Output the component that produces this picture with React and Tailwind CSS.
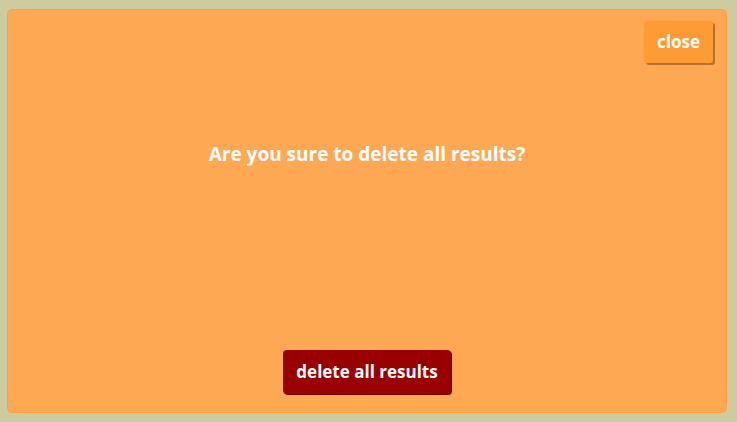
import React from 'react';

export default function App() {
  return (
    <div className="w-full h-[422px] bg-[#cccca0] pt-[9px] pb-[9px] pl-[7px] pr-[10px] font-['Open_Sans',sans-serif]">
      <div className="h-full rounded-[5px] border border-[#ff9f3f] bg-[#ffa854] flex flex-col">
        <div className="flex justify-end pt-[11px] pr-[13px]">
          <button className="h-[42px] px-[13px] rounded-[3px] bg-[#ff9b33] text-white font-bold text-[17px] shadow-[2px_2px_0_#b5722f]">
            close
          </button>
        </div>
        <div className="flex justify-center mt-[77px]">
          <h1 className="text-white font-bold text-[19px]">Are you sure to delete all results?</h1>
        </div>
        <div className="flex-1" />
        <div className="flex justify-center pb-[18px]">
          <button className="h-[44px] px-[13px] rounded-[4px] bg-[#990000] text-white font-bold text-[17px] shadow-[1px_1px_0_#6a0000]">
            delete all results
          </button>
        </div>
      </div>
    </div>
  );
}
